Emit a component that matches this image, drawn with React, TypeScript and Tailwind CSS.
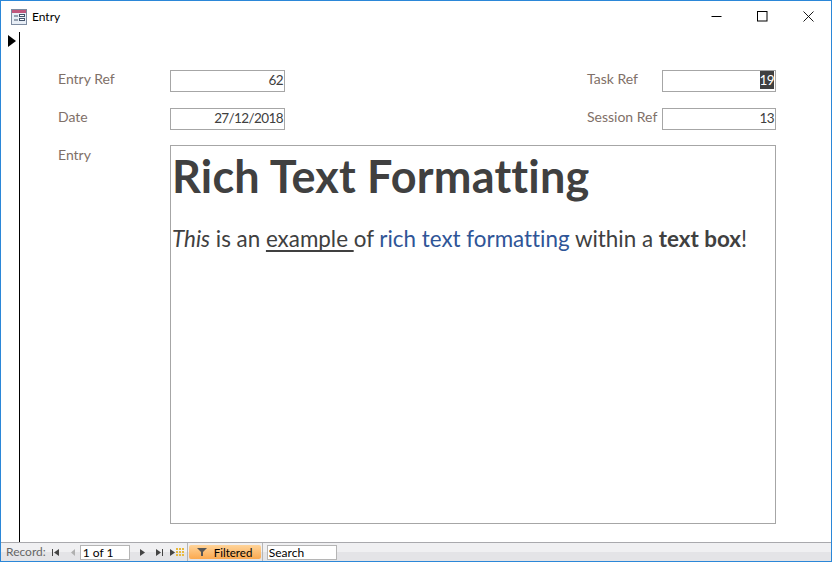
const font = { fontFamily: 'Lato, "Open Sans", sans-serif' } as const;

function FormIcon() {
  return (
    <svg width="16" height="16" viewBox="0 0 16 16" className="shrink-0">
      <rect x="0.5" y="0.5" width="15" height="15" fill="#e8eef6" stroke="#7d8ba0" />
      <rect x="1" y="1" width="14" height="3" fill="#c0567c" />
      <path d="M3 7h4M3 11h4" stroke="#44546a" />
      <rect x="8.5" y="5.5" width="5" height="2" fill="#fff" stroke="#44546a" />
      <rect x="8.5" y="9.5" width="5" height="2" fill="#fff" stroke="#44546a" />
    </svg>
  );
}

function Field({ value, selected }: { value: string; selected?: boolean }) {
  return (
    <div className="h-[22px] border border-[#a6a6a6] bg-white flex items-center justify-end pr-[1px] pb-[1px] text-[13.5px] tracking-[-0.6px] text-[#404040]">
      {selected ? <span className="bg-[#404040] text-white leading-[18px] -mt-[1px]">{value}</span> : value}
    </div>
  );
}

function NavIcon({ d, fill = '#444' }: { d: string; fill?: string }) {
  return (
    <svg width="9" height="9" viewBox="0 0 9 9" className="shrink-0">
      <path d={d} fill={fill} />
    </svg>
  );
}

export default function App() {
  return (
    <div style={font} className="w-[832px] h-[562px] flex flex-col bg-white border border-[#2b87d8] overflow-hidden text-[#404040] [font-variant-ligatures:none]">
      {/* title bar */}
      <div className="h-[31px] shrink-0 flex items-center pl-[10px]">
        <FormIcon />
        <span className="ml-[5px] text-[12px] text-black">Entry</span>
        <div className="ml-auto flex items-center pr-[17px] gap-[35px]">
          <svg width="11" height="11" viewBox="0 0 11 11"><path d="M0.5 5.5h10" stroke="#000" /></svg>
          <svg width="11" height="11" viewBox="0 0 11 11"><rect x="0.5" y="0.5" width="9.5" height="9.5" fill="none" stroke="#000" /></svg>
          <svg width="11" height="11" viewBox="0 0 11 11"><path d="M0.5 0.5l10 10M10.5 0.5l-10 10" stroke="#000" fill="none" strokeWidth="0.9" /></svg>
        </div>
      </div>

      {/* record selector + form body */}
      <div className="flex-1 flex min-h-0">
        <div className="w-[19px] shrink-0 border-r border-black pl-[7px] pt-[3px]">
          <svg width="8" height="12" viewBox="0 0 8 12"><path d="M0 0l8 6-8 6z" fill="#000" /></svg>
        </div>
        <div className="flex-1 pt-[38px] pl-[38px] pr-[55px]">
          <div className="grid grid-cols-[112px_115px_1fr_75px_114px] grid-rows-[22px_22px] gap-y-[16px] text-[14px]">
            <div className="text-[#7f7068] leading-[18px]">Entry Ref</div>
            <Field value="62" />
            <div />
            <div className="text-[#7f7068] leading-[18px]">Task Ref</div>
            <Field value="19" selected />
            <div className="text-[#7f7068] leading-[18px]">Date</div>
            <Field value="27/12/2018" />
            <div />
            <div className="text-[#7f7068] leading-[18px]">Session Ref</div>
            <Field value="13" />
          </div>
          <div className="flex mt-[15px]">
            <div className="w-[112px] text-[14px] leading-[20px] text-[#7f7068]">Entry</div>
            <div className="w-[606px] h-[379px] border border-[#a6a6a6] pl-[1px] pr-[2px]">
              <h1 className="text-[45px] leading-[60px] font-bold tracking-[0.2px]">Rich Text Formatting</h1>
              <p className="text-[22.4px] leading-[30px] mt-[18px] whitespace-nowrap">
                <em>This</em> is an <span className="underline decoration-2 underline-offset-[3px] [text-decoration-skip-ink:none]">example </span>of{' '}
                <span className="text-[#2f5597]">rich text formatting</span> within a <b>text box</b>!
              </p>
            </div>
          </div>
        </div>
      </div>

      {/* navigation bar */}
      <div className="h-[19px] shrink-0 flex items-center border-t border-[#a9a9ad] bg-[linear-gradient(#f0f0f2_50%,#e4e4e7_50%)] text-[12px] pl-[5px]">
        <span className="text-[#666]">Record:</span>
        <div className="ml-[5px]"><NavIcon d="M1 1h1v7H1zM8 1v7L3 4.5z" /></div>
        <div className="ml-[8px]"><NavIcon d="M7 1v7L3 4.5z" fill="#b0b0b0" /></div>
        <div className="ml-[3px] w-[50px] h-[15px] bg-white border border-[#b5b5b5] pl-[2px] leading-[13px] text-black">1 of 1</div>
        <div className="ml-[8px]"><NavIcon d="M2 1v7l5-3.5z" /></div>
        <div className="ml-[8px]"><NavIcon d="M1 1v7l5-3.5zM7 1h1v7H7z" /></div>
        <div className="ml-[5px] flex">
          <NavIcon d="M1 1v7l5-3.5z" />
          <svg width="8" height="8" viewBox="0 0 8 8" className="-ml-[2px]"><path d="M0 0h2v2H0zM3 0h2v2H3zM6 0h2v2H6zM0 3h2v2H0zM3 3h2v2H3zM6 3h2v2H6zM0 6h2v2H0zM3 6h2v2H3zM6 6h2v2H6z" fill="#e8b93c" /></svg>
        </div>
        <div className="ml-[3px] h-full border-l border-[#b5b5b5] pl-[1px] flex items-center">
          <div className="w-[72px] h-[14px] rounded-[2px] bg-[linear-gradient(#ffd49a,#fba94f)] flex items-center text-black pl-[8px]">
            <svg width="10" height="8" viewBox="0 0 10 8"><path d="M0 0h10L6 4v4H4V4z" fill="#555" /></svg>
            <span className="ml-[7px] leading-[16px] text-[11.5px] pt-[1px]">Filtered</span>
          </div>
        </div>
        <div className="ml-[1px] h-full border-l border-[#b5b5b5] pl-[4px] flex items-center">
          <div className="w-[70px] h-[15px] bg-white border border-[#b5b5b5] pl-[1px] leading-[13px] text-black">Search</div>
        </div>
      </div>
    </div>
  );
}
